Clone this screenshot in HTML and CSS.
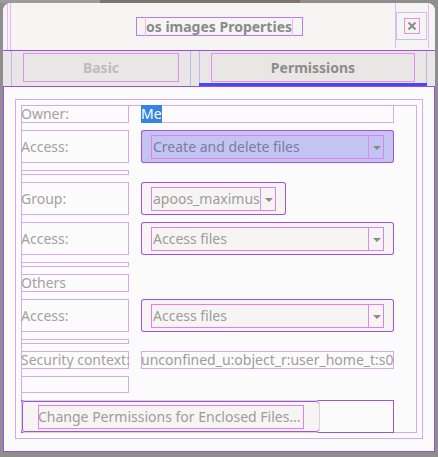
FILE: index.html
```html
<!DOCTYPE html>
<html>
<head>
<meta charset="utf-8">
<link rel="stylesheet" href="styles.css">
</head>
<body>
<div class="window">
  <header class="headerbar">
    <div class="hb-start"><div class="hb-guide"></div></div>
    <div class="title"><span class="title-text">os images Properties</span></div>
    <div class="hb-end">
      <div class="close-wrap">
        <div class="close-btn">
          <span class="close-icon">
            <svg width="16" height="16" viewBox="0 0 16 16"><path d="M4.5 4.5 L11.5 11.5 M11.5 4.5 L4.5 11.5" stroke="#8a8a8a" stroke-width="2" stroke-linecap="butt" fill="none"/></svg>
          </span>
        </div>
      </div>
    </div>
  </header>
  <nav class="tabs">
    <div class="tab tab-basic"><div class="tab-label disabled">Basic</div></div>
    <div class="tab tab-perm active"><div class="tab-label">Permissions</div></div>
  </nav>
  <main class="content">
    <div class="frame">
      <div class="grid">
        <div class="label">Owner:</div>
        <div class="value"><span class="selected">Me</span></div>

        <div class="label">Access:</div>
        <div class="combo combo-wide focused">
          <div class="combo-inner"><span class="combo-text">Create and delete files</span><span class="combo-arrow"><i class="tri"></i></span></div>
        </div>

        <div class="label spacer"></div>
        <div class="empty"></div>

        <div class="label">Group:</div>
        <div class="combo combo-narrow">
          <div class="combo-inner"><span class="combo-text">apoos_maximus</span><span class="combo-arrow"><i class="tri"></i></span></div>
        </div>

        <div class="label">Access:</div>
        <div class="combo combo-wide">
          <div class="combo-inner"><span class="combo-text">Access files</span><span class="combo-arrow"><i class="tri"></i></span></div>
        </div>

        <div class="label spacer"></div>
        <div class="empty"></div>

        <div class="label">Others</div>
        <div class="empty"></div>

        <div class="label">Access:</div>
        <div class="combo combo-wide">
          <div class="combo-inner"><span class="combo-text">Access files</span><span class="combo-arrow"><i class="tri"></i></span></div>
        </div>

        <div class="label spacer"></div>
        <div class="empty"></div>

        <div class="label">Security context:</div>
        <div class="value"><span class="plain">unconfined_u:object_r:user_home_t:s0</span></div>

        <div class="label"></div>
        <div class="empty"></div>

        <div class="button-row">
          <div class="button"><span class="button-text">Change Permissions for Enclosed Files…</span></div>
        </div>
      </div>
    </div>
  </main>
</div>
</body>
</html>
```

FILE: styles.css
```css
* { box-sizing: border-box; }
html, body { margin: 0; padding: 0; }
body {
  width: 438px;
  height: 457px;
  overflow: hidden;
  background: linear-gradient(to right, #9b9b9b 0, #9b9b9b 100px, #7d7470 100px, #7d7470 300px, #8e8e8e 300px) top / 100% 3px no-repeat, #8e8e8e;
  font-family: "Noto Sans", "DejaVu Sans", sans-serif;
  font-size: 14px;
  padding: 3px 3px 0 3px;
}
.window {
  width: 432px;
  height: 449px;
  background: #fcfbfb;
  border-radius: 8px 8px 0 0;
  overflow: hidden;
  display: flex;
  flex-direction: column;
}
.headerbar {
  height: 47px;
  flex: none;
  background: #f6f5f4;
  display: grid;
  grid-template-columns: 1fr 167px 1fr;
  align-items: stretch;
}
.hb-start { display: flex; padding-left: 4px; }
.hb-guide {
  width: 4px;
  height: 100%;
  border-left: 1px solid #f0b4f4;
  border-right: 1px solid #f0b4f4;
}
.title {
  align-self: center;
  height: 19px;
  box-shadow: inset 0 0 0 1px #b67cf0;
  display: flex;
  justify-content: center;
  align-items: center;
}
.title-text {
  font-weight: bold;
  color: #8a8a8a;
  font-size: 14px;
  line-height: 19px;
  box-shadow: inset 1px 0 0 #f0b4f4, inset -1px 0 0 #f0b4f4;
  padding: 0 1px;
}
.hb-end { display: flex; justify-content: flex-end; padding-right: 6px; }
.close-wrap {
  width: 34px;
  height: 45px;
  box-shadow: inset 1px 0 0 #f0b4f4, inset -1px 0 0 #f0b4f4;
  padding: 9px 2px 0 1px;
}
.close-btn {
  width: 31px;
  height: 28px;
  box-shadow: inset 0 0 0 1px #c4c0f2;
  display: flex;
  align-items: center;
  justify-content: center;
}
.close-icon {
  width: 16px;
  height: 16px;
  display: block;
  box-shadow: inset 0 0 0 1px #e88ef2;
}
.close-icon svg { display: block; }

.tabs {
  height: 37px;
  flex: none;
  background: #e8e7e6;
  border-top: 1px solid #9a4fe6;
  border-bottom: 1px solid #9a4fe6;
  display: flex;
  gap: 8px;
  padding: 0 8px;
}
.tab {
  padding: 2px 12px 0;
  box-shadow: inset 1px 0 0 #bdb8f0, inset -1px 0 0 #bdb8f0;
}
.tab-basic { width: 180px; }
.tab-perm { width: 228px; }
.tab.active { border-bottom: 3px solid #4848f0; }
.tab-label {
  height: 29px;
  box-shadow: inset 0 0 0 1px #e58ef0;
  display: flex;
  align-items: center;
  justify-content: center;
  font-weight: bold;
  color: #8c8c8c;
}
.tab-label.disabled { color: #bcbcbc; }

.content {
  flex: 1;
  border: 1px solid #9a4fe6;
  border-top: none;
  padding: 12px 11px;
  background: #fcfbfb;
}
.frame {
  height: 100%;
  box-shadow: inset 0 0 0 1px #d9a8f3;
  padding: 6px;
}
.grid {
  height: 100%;
  box-shadow: inset 0 0 0 1px #d9a8f3;
  display: grid;
  grid-template-columns: 108px 253px;
  grid-template-rows: 18px 33px 5px 33px 33px 5px 18px 33px 5px 18px 17px 33px;
  column-gap: 12px;
  row-gap: 7px;
  align-content: start;
}
.label {
  box-shadow: inset 0 0 0 1px #d9a8f3;
  color: #a2a2a2;
  display: flex;
  align-items: center;
  white-space: nowrap;
  line-height: 18px;
}
.value {
  box-shadow: inset 0 0 0 1px #d9a8f3;
  display: flex;
  align-items: center;
  line-height: 18px;
  white-space: nowrap;
  overflow: hidden;
}
.selected {
  background: #3584e4;
  color: #ffffff;
  height: 18px;
  line-height: 18px;
}
.plain { color: #9c9c9c; }

.combo {
  background: #f6f5f4;
  border-radius: 3px;
  box-shadow: inset 0 0 0 1px #9f52ea;
  padding: 5px 10px 4px 10px;
}
.combo-wide { width: 253px; }
.combo-narrow { width: 145px; }
.combo.focused { background: #c4c4f3; }
.combo-inner {
  height: 24px;
  box-shadow: inset 0 0 0 1px #e17ef0;
  display: flex;
  align-items: stretch;
}
.combo-text {
  flex: 1;
  padding-left: 2px;
  color: #9c9c9c;
  line-height: 24px;
  white-space: nowrap;
  overflow: hidden;
}
.combo.focused .combo-text { color: #7c7c9e; }
.combo-arrow {
  width: 16px;
  flex: none;
  border-left: 1px solid #d88cf0;
  display: flex;
  align-items: center;
  justify-content: center;
}
.tri {
  display: block;
  width: 0;
  height: 0;
  border-left: 4px solid transparent;
  border-right: 4px solid transparent;
  border-top: 4px solid #8a8a8a;
  margin-top: 1px;
}

.button-row {
  grid-column: 1 / 3;
  box-shadow: inset 0 0 0 1px #9f52ea;
  display: flex;
}
.button {
  width: 299px;
  height: 33px;
  background: #f6f5f4;
  border: 1px solid #d8d4d0;
  border-radius: 4px;
  padding: 4px 15px 3px 16px;
  display: flex;
  box-shadow: inset 1px 0 0 #9f52ea, inset 0 -1px 0 #9f52ea, inset 0 1px 0 #9f52ea;
}
.button-text {
  flex: 1;
  height: 24px;
  line-height: 24px;
  color: #9c9c9c;
  white-space: nowrap;
  overflow: hidden;
  box-shadow: inset 0 0 0 1px #e17ef0;
}
```
